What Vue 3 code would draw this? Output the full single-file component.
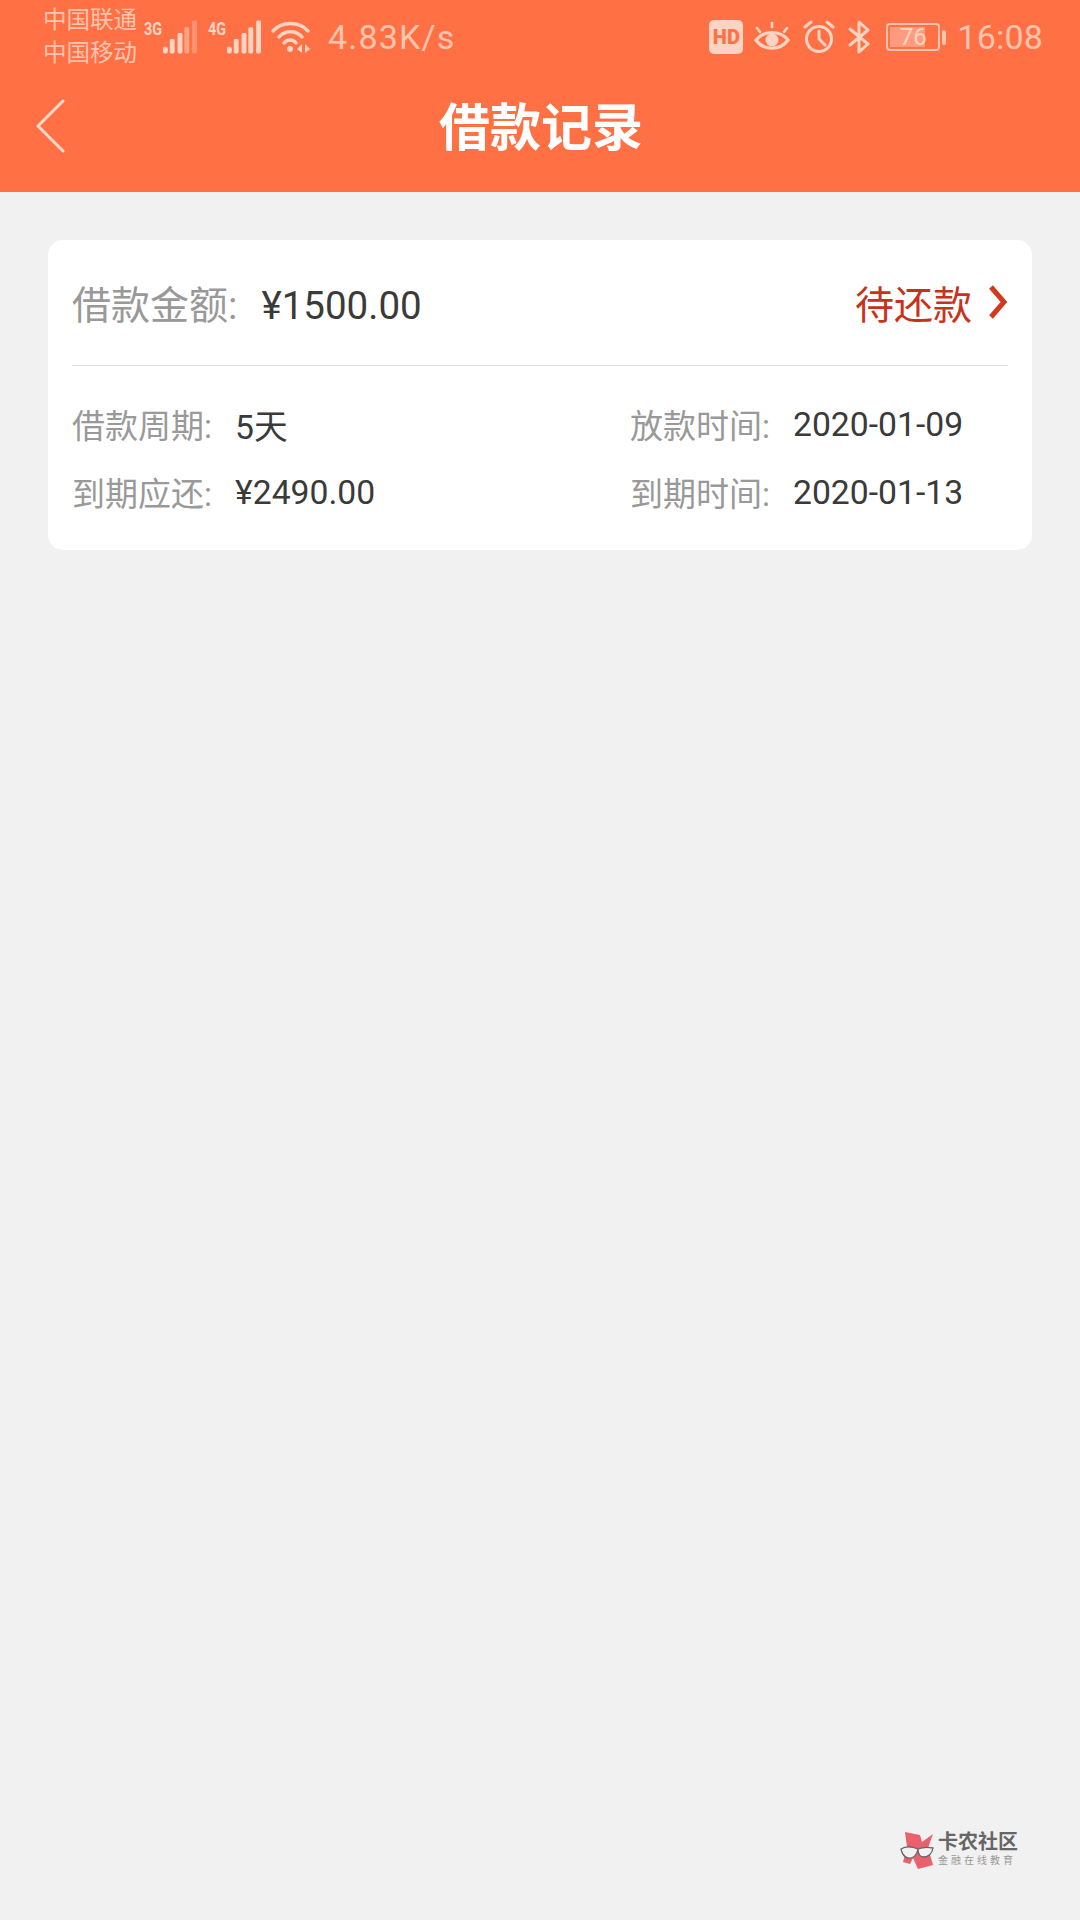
<template>
  <div class="page">
    <header class="top">
      <div class="status">
        <div class="carrier">
          <span>中国联通</span>
          <span>中国移动</span>
        </div>
        <div class="signal">
          <span class="net">3G</span>
          <svg width="36" height="34" viewBox="0 0 36 34">
            <rect x="1" y="27" width="5" height="7" rx="2" fill="#ffd3c2" />
            <rect x="8" y="19" width="5" height="15" rx="1.5" fill="#ffd3c2" />
            <rect x="16" y="13" width="5" height="21" rx="1.5" fill="#ffd3c2" />
            <rect x="23" y="7" width="5" height="27" rx="1.5" fill="#ffa486" />
            <rect x="31" y="0" width="5" height="34" rx="1.5" fill="#ff9272" />
          </svg>
        </div>
        <div class="signal second">
          <span class="net">4G</span>
          <svg width="36" height="34" viewBox="0 0 36 34">
            <rect x="1" y="27" width="5" height="7" rx="2" fill="#ffd3c2" />
            <rect x="8" y="19" width="5" height="15" rx="1.5" fill="#ffd3c2" />
            <rect x="16" y="13" width="5" height="21" rx="1.5" fill="#ffd3c2" />
            <rect x="23" y="7" width="5" height="27" rx="1.5" fill="#ffd3c2" />
            <rect x="31" y="0" width="5" height="34" rx="1.5" fill="#ffd3c2" />
          </svg>
        </div>
        <svg class="wifi" width="40" height="34" viewBox="0 0 40 34" fill="none" stroke="#ffd3c2" stroke-width="3.4" stroke-linecap="round">
          <path d="M2 11C11 1 28 1 37 11" />
          <path d="M8 17C14 10 25 10 31 17" />
          <path d="M13 23C16 19 22 19 25 23" />
          <circle cx="19" cy="29" r="3" fill="#ffd3c2" stroke="none" />
          <path d="M31 24L26 29L31 33Z" fill="#ffd3c2" stroke="none" />
          <path d="M34 24L39 29L34 33Z" fill="#ffd3c2" stroke="none" />
        </svg>
        <span class="speed">4.83K/s</span>
        <div class="right">
          <span class="hd">HD</span>
          <svg class="eye" width="36" height="32" viewBox="0 0 36 32" fill="none" stroke="#ffd3c2" stroke-width="3.2" stroke-linecap="round">
            <path d="M2 19C10 9 26 9 34 19C26 30 10 30 2 19Z" />
            <circle cx="18" cy="19" r="6.5" fill="#ffd3c2" stroke="none" />
            <path d="M3 7L6 11M18 2V6M33 7L30 11" stroke-width="2.6" />
          </svg>
          <svg class="alarm" width="34" height="34" viewBox="0 0 34 34" fill="none" stroke="#ffd3c2" stroke-width="3" stroke-linecap="round">
            <circle cx="17" cy="19" r="12.5" />
            <path d="M17 11V19L23 25" />
            <path d="M3 7L9 2M31 7L25 2" />
          </svg>
          <svg class="bt" width="22" height="34" viewBox="0 0 22 34" fill="none" stroke="#ffd3c2" stroke-width="3" stroke-linecap="round" stroke-linejoin="round">
            <path d="M2 9L20 24L11 32V2L20 10L2 25" />
          </svg>
          <div class="battery">
            <div class="cell">
              <div class="fill" :style="{ width: battery + '%' }"></div>
              <span>{{ battery }}</span>
            </div>
            <i></i>
          </div>
          <span class="clock">16:08</span>
        </div>
      </div>
      <nav class="nav">
        <svg class="back" width="30" height="54" viewBox="0 0 30 54" fill="none" stroke="#ffd9cb" stroke-width="3" stroke-linecap="round" stroke-linejoin="round">
          <path d="M27 2L2 27L27 52" />
        </svg>
        <h1>借款记录</h1>
      </nav>
    </header>

    <main class="list">
      <section v-for="item in records" :key="item.id" class="card">
        <div class="head">
          <div class="amount">
            <span class="label">借款金额:</span>
            <span class="value">{{ item.amount }}</span>
          </div>
          <div class="state">
            <span>{{ item.state }}</span>
            <svg width="20" height="34" viewBox="0 0 20 34" fill="none" stroke="#d23a20" stroke-width="5" stroke-linejoin="miter">
              <path d="M3 2L16 17L3 32" />
            </svg>
          </div>
        </div>
        <div class="rows">
          <div v-for="row in item.rows" :key="row.label" class="cell-item">
            <span class="label">{{ row.label }}</span>
            <span class="value">{{ row.value }}</span>
          </div>
        </div>
      </section>
    </main>

    <div class="mark">
      <svg width="34" height="42" viewBox="0 0 34 42">
        <path d="M5 3L20 6L22 13L33 5L28 19L33 36L18 40L13 29L10 35L3 33L7 18Z" fill="#e8616c" />
        <g fill="#f1f1f1" stroke="#666" stroke-width="1.3">
          <path d="M1 20C6 17 13 18 18 20C17 26 13 30 8 29C4 28 2 25 1 20Z" />
          <path d="M18 20C23 18 28 18 33 19C32 25 28 28 24 28C20 28 18 25 18 20Z" />
        </g>
      </svg>
      <div class="mark-text">
        <b>卡农社区</b>
        <small>金融在线教育</small>
      </div>
    </div>
  </div>
</template>

<script setup>
const battery = 76

const records = [
  {
    id: 1,
    amount: '¥1500.00',
    state: '待还款',
    rows: [
      { label: '借款周期:', value: '5天' },
      { label: '放款时间:', value: '2020-01-09' },
      { label: '到期应还:', value: '¥2490.00' },
      { label: '到期时间:', value: '2020-01-13' }
    ]
  }
]
</script>

<style>
body {
  margin: 0;
  background: #f1f1f1;
}
</style>

<style scoped>
.page {
  position: relative;
  height: 1920px;
  overflow: hidden;
  background: #f1f1f1;
  font-family: Roboto, "Noto Sans CJK SC", sans-serif;
  color: #3a3a3a;
}

.top {
  height: 192px;
  background: #ff7045;
}

.status {
  display: flex;
  align-items: center;
  height: 74px;
  padding-left: 43px;
  padding-right: 37px;
  color: #ffd3c2;
}

.carrier {
  display: flex;
  flex-direction: column;
  width: 101px;
  font-size: 23.5px;
  line-height: 33px;
  color: #ffc4ae;
  white-space: nowrap;
}

.signal {
  display: flex;
  align-items: flex-start;
  position: relative;
  width: 53px;
  height: 34px;
}

.signal.second {
  margin-left: 11px;
}

.net {
  width: 18px;
  font-size: 18px;
  line-height: 18px;
  font-weight: 700;
  transform: scaleX(0.8);
  transform-origin: left top;
}

.wifi {
  margin-left: 10px;
}

.speed {
  margin-left: 17px;
  font-size: 34px;
  letter-spacing: 1.2px;
  color: #ffc4ae;
}

.right {
  display: flex;
  align-items: center;
  margin-left: auto;
}

.hd {
  width: 34px;
  height: 34px;
  border-radius: 5px;
  background: #ffd3c2;
  color: #ff7045;
  font-size: 20px;
  font-weight: 900;
  line-height: 34px;
  text-align: center;
}

.eye {
  margin-left: 11px;
}

.alarm {
  margin-left: 12px;
}

.bt {
  margin-left: 12px;
}

.battery {
  display: flex;
  align-items: center;
  margin-left: 16px;
}

.cell {
  position: relative;
  box-sizing: border-box;
  width: 54px;
  height: 28px;
  border: 2px solid #ffc4ae;
  border-radius: 4px;
  padding: 2px;
  text-align: center;
}

.fill {
  height: 100%;
  background: #ff9c80;
}

.cell span {
  position: absolute;
  left: 0;
  right: 0;
  top: -2px;
  font-size: 24px;
  line-height: 28px;
  color: #ffd3c2;
}

.battery i {
  width: 4px;
  height: 15px;
  margin-left: 2px;
  border-radius: 2px;
  background: #ffc4ae;
}

.clock {
  margin-left: 11px;
  font-size: 34px;
  letter-spacing: 0.2px;
  color: #ffc4ae;
}

.nav {
  position: relative;
  display: flex;
  align-items: center;
  justify-content: center;
  height: 118px;
}

.back {
  position: absolute;
  left: 36px;
  top: 25px;
}

.nav h1 {
  margin: 0 0 8px 2px;
  font-size: 51px;
  font-weight: 700;
  line-height: 108px;
  color: #fff;
}

.list {
  padding: 48px 48px 0;
}

.card {
  box-sizing: border-box;
  height: 310px;
  padding: 0 24px;
  border-radius: 15px;
  background: #fff;
}

.head {
  display: flex;
  align-items: center;
  justify-content: space-between;
  box-sizing: border-box;
  height: 126px;
  padding-bottom: 2px;
  border-bottom: 1px solid #dedede;
}

.amount .label,
.state span {
  font-size: 39px;
}

.amount .value {
  margin-left: 24px;
  font-size: 38.5px;
}

.label {
  color: #999;
}

.state {
  display: flex;
  align-items: center;
  color: #c9321a;
  gap: 16px;
}

.rows {
  display: grid;
  grid-template-columns: 558px 1fr;
  grid-auto-rows: 68px;
  padding-top: 24px;
}

.cell-item {
  display: flex;
  align-items: center;
  font-size: 33px;
  white-space: nowrap;
}

.cell-item .value {
  margin-left: 23px;
  font-size: 33.7px;
}

.mark {
  position: absolute;
  left: 900px;
  top: 1829px;
  display: flex;
  gap: 4px;
}

.mark-text {
  display: flex;
  flex-direction: column;
  padding-top: 1px;
}

.mark-text b {
  font-size: 20px;
  line-height: 24px;
  color: #666;
  white-space: nowrap;
}

.mark-text small {
  font-size: 10px;
  line-height: 14px;
  letter-spacing: 3px;
  color: #999;
  white-space: nowrap;
}
</style>
